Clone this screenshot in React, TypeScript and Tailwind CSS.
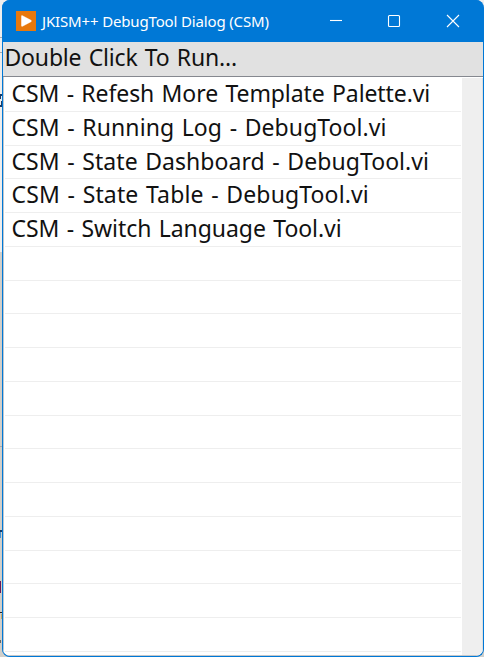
const rows = [
  { text: 'CSM - Refesh More Template Palette.vi', cls: 'tracking-[-0.09px]' },
  { text: 'CSM - Running Log - DebugTool.vi', cls: 'tracking-[0.08px]' },
  { text: 'CSM - State Dashboard - DebugTool.vi', cls: 'tracking-[0.06px]' },
  { text: 'CSM - State Table - DebugTool.vi', cls: 'tracking-[0.13px]' },
  { text: 'CSM - Switch Language Tool.vi', cls: 'tracking-[-0.06px]' },
];
const blanks = Array.from({ length: 12 }, () => ({ text: '', cls: '' }));

function TitleBar() {
  return (
    <header className="flex h-[42px] shrink-0 items-center bg-[#0078d6] pl-[14px] text-white">
      <svg className="h-5 w-5 shrink-0" viewBox="0 0 20 20">
        <path d="M0 0H20V20H0Z" fill="#e8780b" />
        <path d="M5.5 5.2Q5.5 4.2 6.5 4.8L15 9.3Q16 10 15 10.7L6.5 15.2Q5.5 15.7 5.5 14.7Z" fill="#fff" stroke="#fff" strokeWidth=".5" />
      </svg>
      <span className="ml-[6px] w-[280px] whitespace-nowrap text-[15px] leading-5 tracking-[-0.15px]">JKISM++ DebugTool Dialog (CSM)</span>
      <svg className="h-[42px] w-[154px] shrink-0" viewBox="322 0 154 42" fill="none" stroke="#fff" strokeWidth="1.1">
        <path d="M330 20.5H342" />
        <rect x="388.5" y="15.5" width="11" height="11" rx="1" />
        <path d="M447 15L459 27M459 15L447 27" />
      </svg>
    </header>
  );
}

// Sliver of the desktop that stays visible beside the dialog.
function DesktopEdge() {
  return (
    <svg className="h-full w-[2px] shrink-0" viewBox="0 0 2 657" shapeRendering="crispEdges">
      <path d="M0 0H2V252H0Z" fill="#eeeeee" />
      <path d="M0 252H2V657H0Z" fill="#d1cfca" />
      <path d="M0 37H2V38H0ZM0 52H2V53H0ZM0 446H2V447H0Z" fill="#aaaaaa" />
      <path d="M0 94H2V96H0ZM0 96H1V99H0ZM1 101H2V105H1ZM0 105H2V107H0ZM0 530H2V532H0Z" fill="#173b68" />
      <path d="M0 532H1V538H0Z" fill="#4c91cb" />
      <path d="M0 581H1V593H0Z" fill="#671957" />
      <path d="M0 612H2V613H0Z" fill="#222222" />
      <path d="M1 614H2V619H1Z" fill="#c9a866" />
      <path d="M0 640H1V643H0Z" fill="#666666" />
    </svg>
  );
}

export default function App() {
  return (
    <div className="flex h-[657px] w-[484px] overflow-hidden bg-linear-to-b from-[#eeeeee] from-50% to-[#d1cfca] to-50% font-['Noto_Sans','Open_Sans',sans-serif] text-[#111]">
      <DesktopEdge />
      <main className="flex h-full w-[482px] flex-col overflow-hidden rounded-lg border-b border-r border-[#0078d6] bg-[#0078d6]">
        <TitleBar />
        <section className="ml-px flex min-h-0 flex-1 flex-col overflow-hidden rounded-b-[7px] bg-white">
          <div className="h-[35px] shrink-0 whitespace-nowrap border-b border-[#85888f] bg-[#e1e1e1] pl-[1.5px] text-[23px] leading-[31px] tracking-[-0.18px] [word-spacing:1.5px]">
            Double Click To Run...
          </div>
          <div className="flex min-h-0 flex-1 gap-px border-b border-l border-[#c4c7ca] pl-px">
            <div className="w-[456px] shrink-0 pt-px">
              {[...rows, ...blanks].map((r, i) => (
                <div key={i} className={`h-[33.78px] whitespace-nowrap border-b border-[#eeeeee] pl-[6.5px] text-[23px] leading-[30px] [word-spacing:1.5px] ${r.cls}`}>
                  {r.text}
                </div>
              ))}
            </div>
            <div className="mt-px flex-1 border-r border-[#dedede] bg-[#efefef]" />
          </div>
        </section>
      </main>
    </div>
  );
}
